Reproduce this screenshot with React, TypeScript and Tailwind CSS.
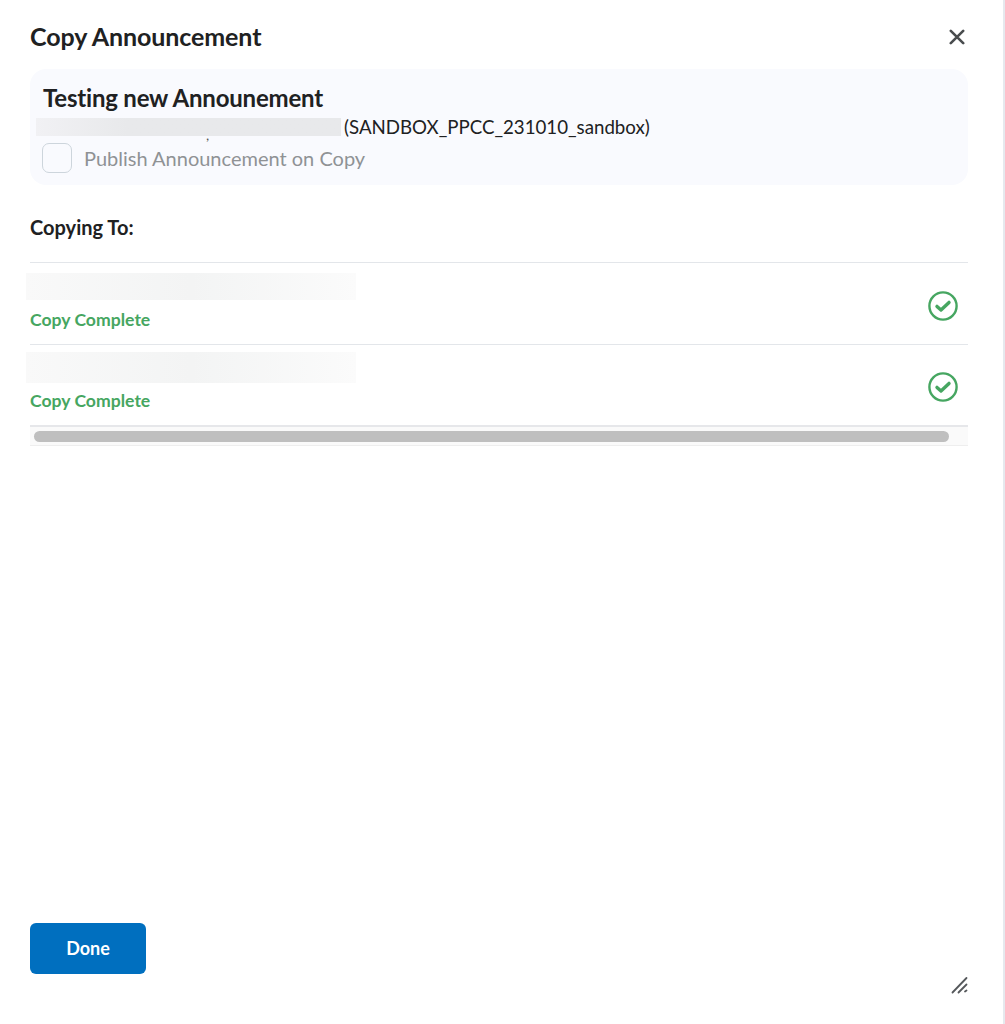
import React from "react";

function CheckCircle() {
  return (
    <svg width="30" height="30" viewBox="0 0 30 30" fill="none" className="shrink-0">
      <circle cx="15" cy="15" r="13.6" stroke="#46a661" strokeWidth="2.4" />
      <path d="M9 15.4 L13 19 L21 11.4" stroke="#46a661" strokeWidth="3.4" strokeLinecap="round" strokeLinejoin="round" />
    </svg>
  );
}

function Row({ blur, text, check }: { blur: string; text: string; check: string }) {
  return (
    <div className="flex items-start justify-between border-t border-[#e3e6ea] h-[82px]">
      <div className="flex flex-col">
        <div className={`${blur} w-[330px] -ml-[4px] bg-linear-to-r from-[#f9f9f9] via-[#f3f4f4] via-50% to-[#fbfbfb]`} />
        <div className={`${text} text-[17.6px] leading-[21px] font-bold text-[#46a661]`}>Copy Complete</div>
      </div>
      <div className={`${check} mr-[10px]`}>
        <CheckCircle />
      </div>
    </div>
  );
}

export default function App() {
  return (
    <div
      className="relative w-[1005px] h-[1024px] bg-white border-r-2 border-[#e6e9ee] overflow-hidden flex flex-col pl-[30px] pr-[35px] text-[#202122]"
      style={{ fontFamily: '"Lato", "Liberation Sans", sans-serif' }}
    >
      <div className="flex items-center justify-between pt-[20px] h-[69px] pb-[17px]">
        <h1 className="text-[25px] leading-[32px] font-bold tracking-[-0.1px]">Copy Announcement</h1>
        <svg width="16" height="16" viewBox="0 0 16 16" className="mr-[3px] mt-[1px]" fill="none">
          <path d="M1.8 1.8 L14.2 14.2 M14.2 1.8 L1.8 14.2" stroke="#494c4e" strokeWidth="2.6" strokeLinecap="round" />
        </svg>
      </div>

      <div className="bg-[#f9fafe] rounded-[16px] h-[116px] pl-[12px] pt-[13px]">
        <h2 className="text-[24px] leading-[32px] font-bold tracking-[-0.2px] pl-[1px]">Testing new Announement</h2>
        <div className="flex items-center h-[26px] -ml-[6px]">
          <div className="relative w-[305px] h-[18px] mr-[3px] bg-linear-to-r from-[#f1f1f4] via-[#e8e9eb] via-30% to-[#e8e9eb]">
            <span className="absolute left-[170px] top-[10px] text-[14px] leading-[14px] text-[#555]">,</span>
          </div>
          <span className="text-[18.7px] leading-[26px] text-[#202122]">(SANDBOX_PPCC_231010_sandbox)</span>
        </div>
        <label className="flex items-center gap-[12px] mt-[3px]">
          <span className="w-[30px] h-[30px] rounded-[7px] border border-[#cdd5dc] bg-[#f9fafe]" />
          <span className="text-[20px] leading-[30px] text-[#8f9295]">Publish Announcement on Copy</span>
        </label>
      </div>

      <div className="mt-[29px] text-[20px] leading-[26px] font-bold h-[34px]">Copying To:</div>

      <div className="mt-[14px]">
        <Row blur="h-[27px] mt-[10px]" text="mt-[9px]" check="mt-[28px]" />
        <Row blur="h-[31px] mt-[7px]" text="mt-[7px]" check="mt-[27px]" />
      </div>

      <div className="border-t-2 border-b border-[#e6e7ea] border-b-[#eeeeee] bg-[#fafafa] h-[21px] flex items-center pl-[4px] -mt-[1px]">
        <div className="h-[11px] w-[915px] rounded-full bg-[#bfbfbf]" />
      </div>

      <div className="flex-1" />

      <div className="flex items-end justify-between pb-[50px]">
        <button className="w-[116px] h-[51px] rounded-[6px] bg-[#006fbf] text-white text-[18px] font-bold">Done</button>
      </div>

      <svg width="18" height="18" viewBox="0 0 18 18" fill="none" className="absolute left-[951px] top-[976px]">
        <path d="M1.5 16.5 L15.5 2 M7.5 16.5 L15.5 8.5 M14 15.5 L15.5 14.5" stroke="#55585b" strokeWidth="1.8" strokeLinecap="round" />
      </svg>
    </div>
  );
}
